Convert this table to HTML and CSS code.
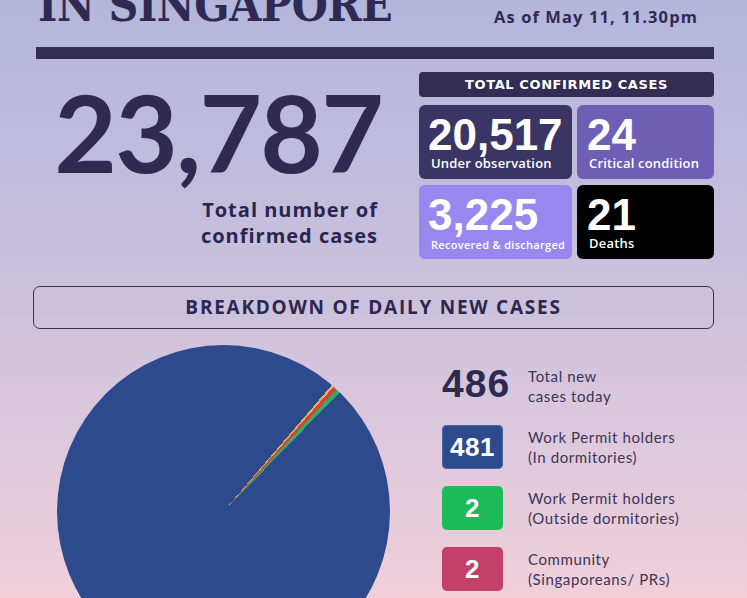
FILE: index.html
```html
<!DOCTYPE html>
<html lang="en">
<head>
<meta charset="utf-8">
<title>COVID-19 in Singapore</title>
<link rel="stylesheet" href="styles.css">
</head>
<body>
<div class="page">
  <header class="top">
    <h1 class="title">IN SINGAPORE</h1>
    <div class="asof">As of May 11, 11.30pm</div>
  </header>
  <div class="rule"></div>

  <section class="summary">
    <div class="total">
      <div class="total-num">23,787</div>
      <div class="total-label">Total number of<br>confirmed cases</div>
    </div>
    <div class="confirmed">
      <div class="conf-head">TOTAL CONFIRMED CASES</div>
      <div class="conf-grid">
        <div class="stat s-obs">
          <div class="stat-num">20,517</div>
          <div class="stat-label">Under observation</div>
        </div>
        <div class="stat s-crit">
          <div class="stat-num">24</div>
          <div class="stat-label">Critical condition</div>
        </div>
        <div class="stat s-rec">
          <div class="stat-num">3,225</div>
          <div class="stat-label small">Recovered &amp; discharged</div>
        </div>
        <div class="stat s-dead">
          <div class="stat-num">21</div>
          <div class="stat-label">Deaths</div>
        </div>
      </div>
    </div>
  </section>

  <div class="breakdown-head">BREAKDOWN OF DAILY NEW CASES</div>

  <section class="breakdown">
    <div class="pie"></div>
    <ul class="legend">
      <li class="item">
        <span class="count">486</span>
        <span class="desc">Total new<br>cases today</span>
      </li>
      <li class="item">
        <span class="badge b-blue">481</span>
        <span class="desc">Work Permit holders<br>(In dormitories)</span>
      </li>
      <li class="item">
        <span class="badge b-green">2</span>
        <span class="desc">Work Permit holders<br>(Outside dormitories)</span>
      </li>
      <li class="item">
        <span class="badge b-red">2</span>
        <span class="desc">Community<br>(Singaporeans/ PRs)</span>
      </li>
    </ul>
  </section>
</div>
</body>
</html>
```

FILE: styles.css
```css
html, body {
  margin: 0;
  padding: 0;
}
body {
  width: 747px;
  height: 598px;
  overflow: hidden;
  background: linear-gradient(180deg, #b3b6db 0%, #bdbadc 20%, #cbc1dc 50%, #dfc9dc 75%, #f0cfd9 100%);
  color: #302a52;
  font-family: "Open Sans", "DejaVu Sans", sans-serif;
}
.page {
  padding: 0 33px;
}

/* header */
.top {
  display: flex;
  justify-content: space-between;
  align-items: flex-start;
  height: 47px;
}
.title {
  margin: -18px 0 0 5px;
  font-family: "DejaVu Serif Condensed", "DejaVu Serif", serif;
  font-stretch: condensed;
  font-weight: 700;
  font-size: 46px;
  line-height: 46px;
  letter-spacing: -0.4px;
  white-space: nowrap;
  color: #302a52;
}
.asof {
  margin-top: 7px;
  padding-right: 16px;
  font-weight: 700;
  font-size: 16.5px;
  line-height: 20px;
  letter-spacing: 1.1px;
  white-space: nowrap;
  color: #302a52;
}
.rule {
  height: 12px;
  margin-left: 3px;
  background: #332d55;
}

/* summary */
.summary {
  display: flex;
  margin-top: 13px;
}
.total {
  flex: 1;
  text-align: right;
  padding-right: 37px;
}
.total-num {
  margin-top: 5px;
  font-family: Lato, sans-serif;
  font-weight: 700;
  font-size: 108px;
  line-height: 108px;
  letter-spacing: -1.8px;
  color: #302a52;
}
.total-label {
  margin-top: 12px;
  padding-right: 4px;
  font-weight: 700;
  font-size: 20px;
  line-height: 26px;
  letter-spacing: 1px;
  color: #2a2550;
}
.confirmed {
  width: 295px;
}
.conf-head {
  height: 25px;
  border-radius: 4px;
  background: #332d55;
  color: #fff;
  text-align: center;
  font-family: "DejaVu Sans", sans-serif;
  font-weight: 700;
  font-size: 13px;
  line-height: 25px;
  letter-spacing: 0.6px;
}
.conf-grid {
  display: grid;
  grid-template-columns: 153px 1fr;
  grid-template-rows: 74px 74px;
  gap: 6px 5px;
  margin-top: 8px;
}
.stat {
  border-radius: 6px;
  padding: 11px 9px 0;
  color: #fff;
  overflow: hidden;
}
.s-obs { background: #3b3565; }
.s-crit { background: #6e5fb4; padding-left: 10px; }
.s-rec { background: #9787ee; }
.s-dead { background: #000; padding-left: 10px; }
.stat-num {
  font-family: "Liberation Sans", Arial, sans-serif;
  font-weight: 700;
  font-size: 44px;
  line-height: 38px;
}
.stat-label {
  margin-top: 1px;
  padding-left: 2px;
  font-weight: 600;
  font-size: 13px;
  line-height: 16px;
  letter-spacing: 0.2px;
  white-space: nowrap;
}
.s-obs .stat-label,
.s-rec .stat-label {
  padding-left: 3px;
}
.stat-label.small {
  margin-top: 3px;
  font-size: 11px;
  letter-spacing: 0.3px;
}

/* breakdown */
.breakdown-head {
  margin-top: 27px;
  height: 41px;
  border: 1.5px solid #3a3258;
  border-radius: 7px;
  text-align: center;
  font-weight: 700;
  font-size: 19px;
  line-height: 41px;
  letter-spacing: 1.75px;
  color: #2c2650;
}
.breakdown {
  display: flex;
  margin-top: 16px;
}
.pie {
  flex: none;
  width: 333px;
  height: 333px;
  margin-left: 24px;
  border-radius: 50%;
  background: conic-gradient(
    #2c4a8c 0deg 40.6deg,
    #e3b64c 40.6deg 41.4deg,
    #d0463f 41.4deg 42.8deg,
    #35a96a 42.8deg 44.3deg,
    #2c4a8c 44.3deg 360deg
  );
}
.legend {
  list-style: none;
  margin: 0 0 0 52px;
  padding: 19px 0 0;
  display: flex;
  flex-direction: column;
  gap: 17px;
}
.item {
  display: flex;
  align-items: center;
  height: 44px;
}
.count,
.badge {
  flex: none;
  width: 61px;
  margin-right: 25px;
  font-family: "Liberation Sans", Arial, sans-serif;
  font-weight: 700;
}
.count {
  font-size: 39px;
  letter-spacing: 1px;
  color: #2d2a4f;
  line-height: 44px;
  margin-top: -4px;
}
.badge {
  height: 44px;
  border-radius: 5px;
  color: #fff;
  text-align: center;
  font-size: 26px;
  line-height: 44px;
  letter-spacing: 0.5px;
}
.b-blue { background: #2d4a8c; box-shadow: inset 0 0 0 1px #4a67a8; }
.b-green { background: #1dba5a; }
.b-red { background: #c2406a; }
.desc {
  font-family: Lato, sans-serif;
  font-size: 15px;
  line-height: 20px;
  letter-spacing: 0.6px;
  color: #3a3558;
}
```
